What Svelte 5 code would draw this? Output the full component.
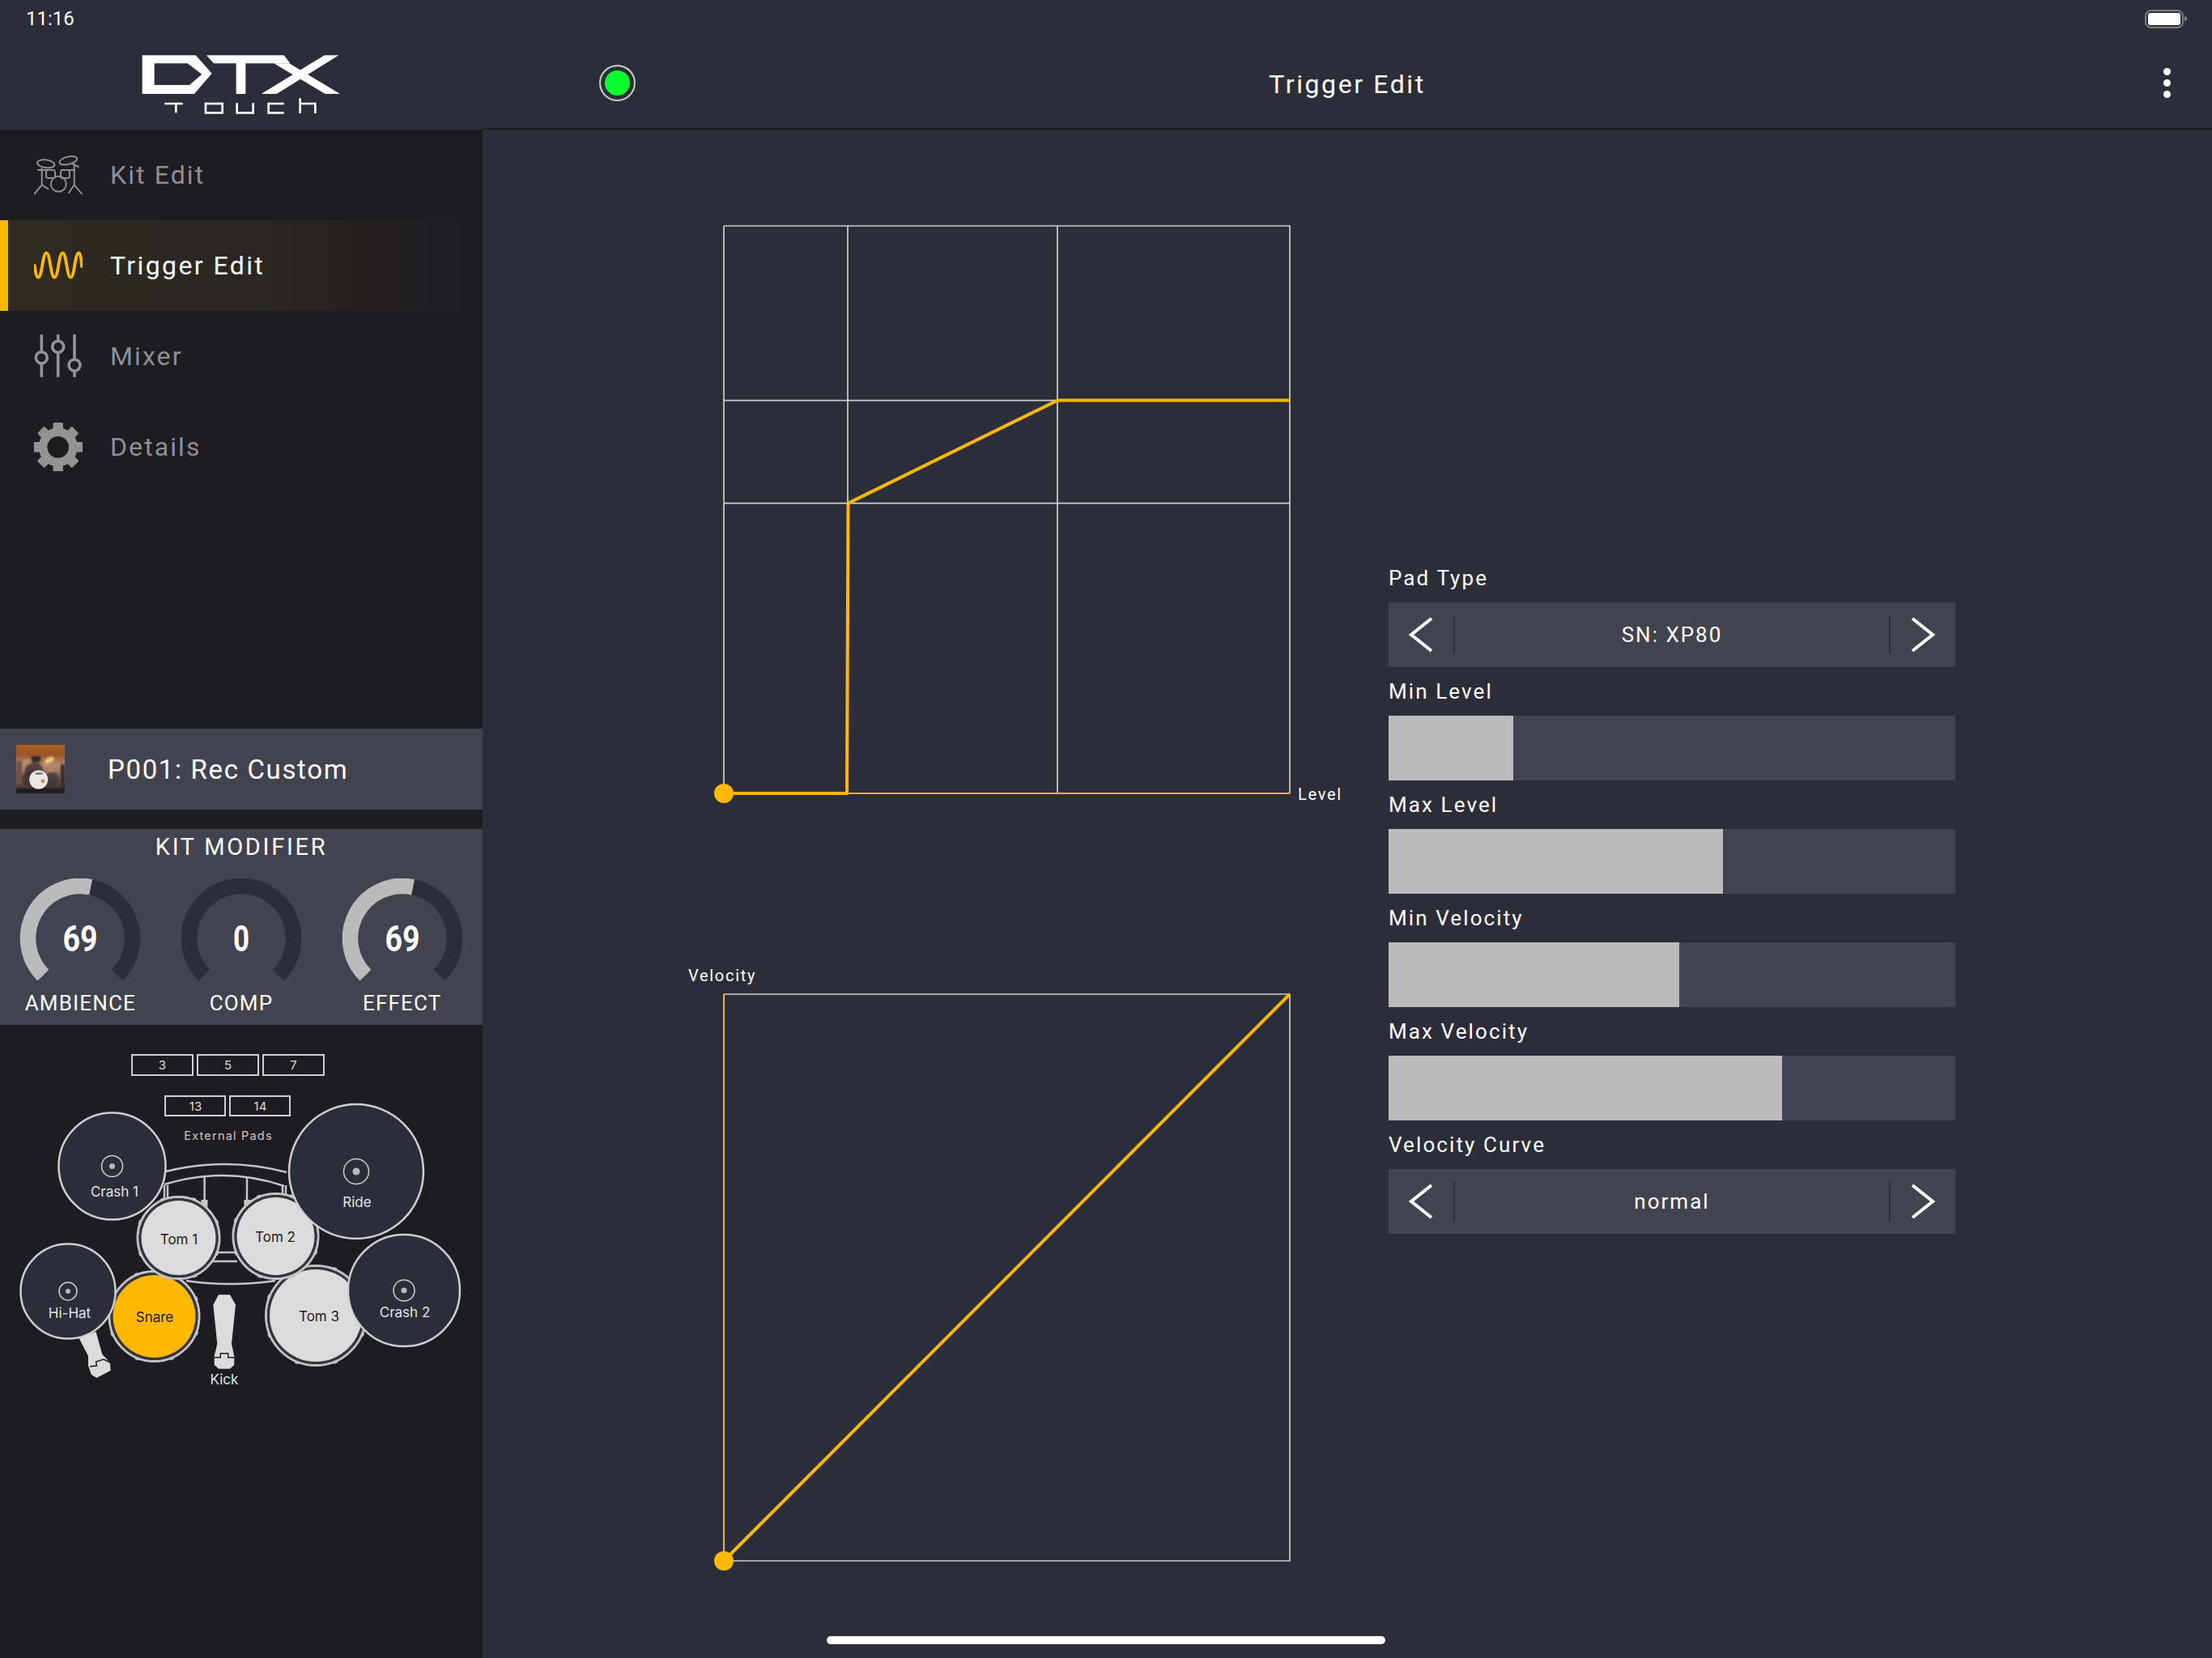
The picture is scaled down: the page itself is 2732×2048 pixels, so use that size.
<script>
    // --- Data ---
    const navItems = [
        { id: 'kit', label: 'Kit Edit' },
        { id: 'trigger', label: 'Trigger Edit', active: true },
        { id: 'mixer', label: 'Mixer' },
        { id: 'details', label: 'Details' }
    ];

    const knobs = [
        { label: 'AMBIENCE', value: 69, width: 43 },
        { label: 'COMP', value: 0, width: 20 },
        { label: 'EFFECT', value: 69, width: 43 }
    ];

    const controls = [
        { label: 'Pad Type', type: 'stepper', text: 'SN: XP80' },
        { label: 'Min Level', type: 'bar', fill: 154 },
        { label: 'Max Level', type: 'bar', fill: 413 },
        { label: 'Min Velocity', type: 'bar', fill: 359 },
        { label: 'Max Velocity', type: 'bar', fill: 486 },
        { label: 'Velocity Curve', type: 'stepper', text: 'normal' }
    ];

    // drawn back to front, they overlap
    const backDrums = [
        { cx: 390, cy: 1625, r: 57, label: 'Tom 3', tx: 394, ty: 1626 },
        { cx: 190.5, cy: 1626, r: 51, label: 'Snare', tx: 191, ty: 1627, active: true },
        { cx: 220.5, cy: 1529, r: 46, label: 'Tom 1', tx: 221, ty: 1531 },
        { cx: 340.5, cy: 1527, r: 48, label: 'Tom 2', tx: 340, ty: 1528 }
    ];

    const cymbals = [
        { cx: 138.5, cy: 1440.5, r: 66, ring: 13, dot: 3.5, label: 'Crash 1', tx: 141.5, ty: 1472 },
        { cx: 440, cy: 1447, r: 83, ring: 15.5, dot: 4.5, label: 'Ride', tx: 441, ty: 1485 },
        { cx: 84, cy: 1595, r: 58.5, ring: 11, dot: 3, label: 'Hi-Hat', tx: 86, ty: 1622 },
        { cx: 499, cy: 1594, r: 69, ring: 13, dot: 3.5, label: 'Crash 2', tx: 500, ty: 1621 }
    ];

    const extPads = [
        { x: 163, y: 1303, label: '3' }, { x: 244, y: 1303, label: '5' }, { x: 325, y: 1303, label: '7' },
        { x: 204, y: 1354, label: '13' }, { x: 284, y: 1354, label: '14' }
    ];

    const lugAngles = [0, 45, 90, 135, 180, 225, 270, 315];
    const gearTeeth = [0, 45, 90, 135];

    // --- Knob geometry ---
    const KNOB_R = 64.5;
    function polar(deg) {
        const a = (deg - 90) * Math.PI / 180;
        return [80 + KNOB_R * Math.cos(a), 74 + KNOB_R * Math.sin(a)];
    }
    function arc(from, to) {
        const [x1, y1] = polar(from);
        const [x2, y2] = polar(to);
        return `M${x1} ${y1} A${KNOB_R} ${KNOB_R} 0 ${to - from > 180 ? 1 : 0} 1 ${x2} ${y2}`;
    }
    const valueAngle = (v) => -135 + (v / 127) * 270;
</script>

<div class="app">
    <header class="top">
        <div class="logo-cell">
            <svg class="logo" viewBox="0 0 840 300" width="280" height="100" aria-label="DTX Touch">
                <path fill="#fff" fill-rule="evenodd" d="M47 55H245L305 122L240 198H47ZM92 85V165H222L268 125L215 85Z" />
                <path fill="#fff" d="M285 55H572L595 85H430V198H395V85H312Z" />
                <path fill="#fff" d="M722 55H775L545 198H488Z" />
                <path fill="#fff" d="M535 85H592L780 198H725Z" />
                <g fill="none" stroke="#fff" stroke-width="8">
                    <path d="M130 234H197M172 234V268" />
                    <rect x="282" y="234" width="62" height="34" />
                    <path d="M398 232V268H458V232" />
                    <path d="M572 234H515V268H572" />
                    <path d="M632 214V270M632 234H688V270" />
                </g>
            </svg>
        </div>
        <div class="top-main">
            <div class="lamp-cell"><span class="lamp"></span></div>
            <h1>Trigger Edit</h1>
            <div class="menu-cell">
                <span class="dots"><i></i><i></i><i></i></span>
            </div>
        </div>
    </header>

    <div class="body">
        <aside class="side">
            <nav>
                {#each navItems as item}
                    <div class="nav-row" class:active={item.active}>
                        <svg class="nav-icon" viewBox="0 0 60 60" width="60" height="60">
                            {#if item.id === 'kit'}
                                <g fill="none" stroke="#8e8e92" stroke-width="2" stroke-linecap="round">
                                    <ellipse cx="14.7" cy="16.3" rx="10.7" ry="4.8" transform="rotate(8 14.7 16.3)" />
                                    <ellipse cx="42.3" cy="12.3" rx="11" ry="4.6" transform="rotate(-14 42.3 12.3)" />
                                    <rect x="15" y="24" width="11" height="10" rx="2.5" />
                                    <rect x="33" y="24" width="11" height="10" rx="2.5" />
                                    <circle cx="30.3" cy="41.3" r="9.5" />
                                    <path d="M9.7 22V42.3L0.7 53.3M9.7 42.3L17.3 47.3M49.7 17.3V42.3L59 53.3M49.7 42.3L43 52.3" />
                                    <path d="M46.3 15.7L54.7 20M5 24H20M38 24H50" />
                                </g>
                            {:else if item.id === 'trigger'}
                                <path fill="none" stroke="#ffb800" stroke-width="3.8" stroke-linecap="round"
                                    d="M0.7 30C1.5 38 3 44.7 5.3 44.7C10 44.7 10.5 14.3 15.3 14.3C20 14.3 20.5 44.7 25.3 44.7S30.5 14.3 35.3 14.3S40.5 44.7 45.3 44.7S50.5 14.3 55.3 14.3C57.5 14.3 58.5 22 59 31" />
                            {:else if item.id === 'mixer'}
                                <g fill="none" stroke="#939393" stroke-width="3.6">
                                    <path d="M9.3 3.3V24.7M9.3 38.7V55.7M29.7 3.3V11.3M29.7 25.3V55.7M50 3.3V34M50 48V55.7" />
                                    <circle cx="9.3" cy="31.7" r="7" />
                                    <circle cx="29.7" cy="18.3" r="7" />
                                    <circle cx="50" cy="41" r="7" />
                                </g>
                            {:else}
                                <g fill="#939393">
                                    {#each gearTeeth as deg}
                                        <rect x="23.5" y="0" width="12.4" height="60.6" rx="1.5" transform="rotate({deg} 29.7 30.3)" />
                                    {/each}
                                    <circle cx="29.7" cy="30.3" r="24" />
                                </g>
                                <circle cx="29.7" cy="30.3" r="13.3" fill="#1c1c21" />
                            {/if}
                        </svg>
                        <span>{item.label}</span>
                    </div>
                {/each}
            </nav>

            <div class="kit-row">
                <svg class="thumb" viewBox="0 0 60 60" width="60" height="60">
                    <defs>
                        <linearGradient id="room" x1="0" y1="0" x2="0" y2="1">
                            <stop offset="0" stop-color="#b0601f" />
                            <stop offset="0.2" stop-color="#9a5428" />
                            <stop offset="0.42" stop-color="#b98a72" />
                            <stop offset="0.75" stop-color="#6a5048" />
                            <stop offset="1" stop-color="#2b2320" />
                        </linearGradient>
                        <filter id="soft"><feGaussianBlur stdDeviation="0.8" /></filter>
                    </defs>
                    <rect width="60" height="60" fill="url(#room)" />
                    <g filter="url(#soft)">
                        <rect x="0" y="20" width="7" height="28" fill="#6e5248" />
                        <rect x="55" y="24" width="5" height="30" fill="#3a2c28" />
                        <rect x="19" y="14" width="11" height="7" fill="#2c2a2c" />
                        <ellipse cx="22" cy="32" rx="11" ry="11" fill="#2a2527" opacity="0.7" />
                        <ellipse cx="14" cy="42" rx="7" ry="9" fill="#332c2c" opacity="0.7" />
                        <ellipse cx="44" cy="43" rx="9" ry="9" fill="#2f2a2a" opacity="0.65" />
                        <ellipse cx="41" cy="19" rx="6.5" ry="3.5" fill="#e8c27a" transform="rotate(-25 41 19)" />
                        <ellipse cx="13" cy="21" rx="6" ry="3" fill="#b3905a" />
                        <ellipse cx="42" cy="31" rx="4" ry="1.6" fill="#b3905a" />
                        <rect x="0" y="54" width="60" height="6" fill="#1f1b1a" />
                    </g>
                    <circle cx="27.7" cy="43" r="11.5" fill="#e9e7e4" />
                    <ellipse cx="28" cy="35.5" rx="5" ry="1.2" fill="#77706a" />
                    <circle cx="33" cy="45" r="2.4" fill="#b09a6a" />
                </svg>
                <span>P001: Rec Custom</span>
            </div>

            <section class="modifier">
                <h2>KIT MODIFIER</h2>
                <div class="knobs">
                    {#each knobs as knob}
                        <div class="knob">
                            <svg viewBox="0 0 160 130" width="160" height="130">
                                <path d={arc(valueAngle(knob.value), 135)} class="knob-track" />
                                {#if knob.value > 0}
                                    <path d={arc(-135, valueAngle(knob.value))} class="knob-fill" />
                                {/if}
                                <text x="80" y="90" class="knob-value" textLength={knob.width} lengthAdjust="spacingAndGlyphs">{knob.value}</text>
                            </svg>
                            <span>{knob.label}</span>
                        </div>
                    {/each}
                </div>
            </section>

            <svg class="drums" viewBox="0 1266 596 450" width="596" height="450">
                {#each extPads as pad}
                    <rect class="ext" x={pad.x} y={pad.y} width={pad.y < 1350 ? 75 : 74} height={pad.y < 1350 ? 25 : 24} />
                    <text class="ext-text" x={pad.x + 37.5} y={pad.y + 18}>{pad.label}</text>
                {/each}
                <text class="ext-title" x="282" y="1408">External Pads</text>

                <g class="rack">
                    <path d="M205 1447Q280 1428.5 354 1448" />
                    <path d="M203 1463Q278 1440 351 1465" />
                    <path d="M252.6 1454V1484M305 1454V1484" />
                    <path d="M203 1464V1482M207 1464V1482M349 1464V1478M353 1464V1478" />
                    <path d="M268 1547H290M262 1558H293" />
                    <path d="M230 1582Q285 1590 340 1582" />
                    <path d="M212 1479H228M332 1476H350" />
                </g>
                <rect x="248.5" y="1482" width="8" height="9" fill="#c8c8c8" />
                <rect x="301.5" y="1482" width="8" height="9" fill="#c8c8c8" />

                <polygon class="pedal" points="263.3,1611.7 270,1599.3 284,1599.3 291,1611.7 286,1660 289.3,1675 289.3,1686 284,1690.7 270,1690.7 264.7,1686 264.7,1675 268.3,1660" />
                <path class="pedal-notch" d="M264.7 1676.7H272.3V1671.7H281.7V1676.7H289.3" />
                <polygon class="pedal" points="97.6,1653 118.6,1645 126.3,1673 135.9,1683 136.6,1693 119.4,1702 112.9,1698 109,1687 109,1675" />
                <path class="pedal-notch" d="M111 1688L119.4 1687L118.6 1682L128 1679L135.9 1683" />
                <text class="drum-dark light" x="277" y="1704">Kick</text>

                {#each backDrums as d}
                    <circle cx={d.cx} cy={d.cy} r={d.r + 4.5} class="shell" />
                    {#each lugAngles as deg}
                        <rect x={d.cx - 2.5} y={d.cy - d.r - 7} width="5" height="4" class="lug" transform="rotate({deg + 22} {d.cx} {d.cy})" />
                    {/each}
                    <circle cx={d.cx} cy={d.cy} r={d.r + 1.5} class="rim" />
                    <circle cx={d.cx} cy={d.cy} r={d.r} class="head" class:hit={d.active} />
                    <text class="drum-dark" x={d.tx} y={d.ty}>{d.label}</text>
                {/each}

                {#each cymbals as c}
                    <circle cx={c.cx} cy={c.cy} r={c.r} class="cymbal" />
                    <circle cx={c.cx} cy={c.cy} r={c.ring} class="bell" />
                    <circle cx={c.cx} cy={c.cy} r={c.dot} fill="#b9b9b9" />
                    <text class="drum-dark light" x={c.tx} y={c.ty}>{c.label}</text>
                {/each}
            </svg>
        </aside>

        <main class="main">
            <div class="charts">
                <svg class="chart-level" viewBox="0 0 840 800" width="840" height="800">
                    <g class="grid">
                        <path d="M54 39H753V740M54 39V740M207 39V740M466 39V740M54 254.6H753M54 381.6H753" />
                    </g>
                    <path d="M207 740H753" class="curve-thin" />
                    <path d="M54 740H206L207.5 381.6L466 254.6H753" class="curve" />
                    <circle cx="54" cy="740" r="12" fill="#ffb800" />
                    <text x="763" y="748" class="axis">Level</text>
                </svg>
                <svg class="chart-velocity" viewBox="0 0 840 760" width="840" height="760">
                    <text x="10" y="21" class="axis">Velocity</text>
                    <g class="grid">
                        <path d="M54 37H753V737H54" />
                    </g>
                    <path d="M54 37V737" class="curve-thin" />
                    <path d="M54 737L753 37" class="curve" />
                    <circle cx="54" cy="737" r="12" fill="#ffb800" />
                </svg>
            </div>

            <div class="controls">
                {#each controls as c}
                    <div class="control">
                        <span class="control-label">{c.label}</span>
                        {#if c.type === 'stepper'}
                            <div class="stepper">
                                <span class="step">
                                    <svg viewBox="0 0 30 44" width="30" height="44"><polyline points="28,2 3,22 28,42" /></svg>
                                </span>
                                <span class="step-text">{c.text}</span>
                                <span class="step right">
                                    <svg viewBox="0 0 30 44" width="30" height="44"><polyline points="2,2 27,22 2,42" /></svg>
                                </span>
                            </div>
                        {:else}
                            <div class="bar"><div class="bar-fill" style="width: {c.fill}px"></div></div>
                        {/if}
                    </div>
                {/each}
            </div>
        </main>
    </div>

    <!-- iOS chrome, lies over the app -->
    <span class="clock">11:16</span>
    <span class="battery"><i></i></span>
    <span class="home"></span>
</div>

<style>
    :global(body) {
        margin: 0;
        background: #2b2e38;
        font-family: Roboto, 'Liberation Sans', sans-serif;
        color: #fff;
    }

    .app {
        position: relative;
        width: 2732px;
        height: 2048px;
        overflow: hidden;
        background: #2b2e38;
        display: flex;
        flex-direction: column;
    }

    /* --- Header --- */
    .top {
        display: flex;
        height: 160px;
        flex-shrink: 0;
    }
    .logo-cell {
        width: 596px;
        display: flex;
        justify-content: center;
        align-items: flex-end;
        padding: 0 0 10px 4px;
        box-sizing: border-box;
    }
    .top-main {
        flex: 1;
        display: grid;
        grid-template-columns: 1fr auto 1fr;
        align-items: center;
        border-bottom: 2px solid #1c1c21;
        padding-top: 46px;
        box-sizing: border-box;
    }
    .lamp-cell {
        padding-left: 144px;
        display: flex;
    }
    .lamp {
        width: 41px;
        height: 41px;
        border-radius: 50%;
        background: #0bff2f;
        border: 2px solid #c4c4c4;
        box-shadow: inset 0 0 0 5px #2b2e38;
    }
    h1 {
        margin: 3px 0 0;
        font-size: 32px;
        font-weight: 400;
        letter-spacing: 2.6px;
    }
    .menu-cell {
        display: flex;
        justify-content: flex-end;
        padding-right: 51px;
    }
    .dots {
        display: flex;
        flex-direction: column;
        gap: 5px;
    }
    .dots i {
        width: 9px;
        height: 9px;
        border-radius: 50%;
        background: #fff;
    }

    /* --- Sidebar --- */
    .body {
        flex: 1;
        display: flex;
        min-height: 0;
    }
    .side {
        width: 596px;
        flex-shrink: 0;
        background: #1c1c21;
        display: flex;
        flex-direction: column;
    }
    .nav-row {
        height: 112px;
        display: flex;
        align-items: center;
        gap: 34px;
        padding-left: 42px;
        color: #8f8f92;
        font-size: 32px;
        letter-spacing: 2.1px;
    }
    .nav-row.active {
        color: #fff;
        letter-spacing: 2.4px;
        background: linear-gradient(90deg, #302a20 0%, #2a2620 55%, #1c1c21 100%);
        box-shadow: inset 10px 0 0 #ffb800;
    }
    .kit-row {
        margin-top: 292px;
        height: 100px;
        background: #41444e;
        display: flex;
        align-items: center;
        gap: 53px;
        padding-left: 20px;
        font-size: 33px;
        letter-spacing: 1.65px;
    }
    .modifier {
        margin-top: 24px;
        height: 242px;
        background: #41444e;
    }
    h2 {
        margin: 0;
        height: 44px;
        line-height: 44px;
        text-align: center;
        font-size: 29px;
        font-weight: 400;
        letter-spacing: 2.7px;
    }
    .knobs {
        display: grid;
        grid-template-columns: repeat(3, 1fr);
        margin-top: 17px;
    }
    .knob {
        display: flex;
        flex-direction: column;
        align-items: center;
    }
    .knob svg {
        display: block;
    }
    .knob span {
        line-height: 48px;
        font-size: 26px;
        letter-spacing: 1.15px;
    }
    .knob-track,
    .knob-fill {
        fill: none;
        stroke-width: 19.5;
    }
    .knob-track {
        stroke: #2b2e38;
    }
    .knob-fill {
        stroke: #bbb;
    }
    .knob-value {
        fill: #fff;
        font-size: 44px;
        font-weight: 700;
        text-anchor: middle;
    }

    /* --- Drum map --- */
    .drums {
        display: block;
        font-family: Inter, 'Noto Sans', sans-serif;
    }
    .ext {
        fill: none;
        stroke: #cfcfcf;
        stroke-width: 2;
    }
    .ext-text {
        fill: #ddd;
        font-size: 15px;
        text-anchor: middle;
    }
    .ext-title {
        fill: #c9c9c9;
        font-size: 14.5px;
        letter-spacing: 1.2px;
        text-anchor: middle;
    }
    .rack {
        fill: none;
        stroke: #c4c4c4;
        stroke-width: 2.5;
    }
    .pedal {
        fill: #dcdcdc;
    }
    .pedal-notch {
        fill: none;
        stroke: #1c1c21;
        stroke-width: 1.5;
    }
    .shell {
        fill: #1c1c21;
        stroke: #c4c4c4;
        stroke-width: 3;
    }
    .lug {
        fill: #c4c4c4;
    }
    .rim {
        fill: none;
        stroke: #33363f;
        stroke-width: 3;
    }
    .head {
        fill: #dcdcdc;
    }
    .head.hit {
        fill: #ffb800;
    }
    .cymbal {
        fill: #2b2e38;
        stroke: #cfcfcf;
        stroke-width: 2.5;
    }
    .bell {
        fill: none;
        stroke: #cfcfcf;
        stroke-width: 1.5;
    }
    .drum-dark {
        fill: #1c1c21;
        font-size: 17px;
        text-anchor: middle;
        dominant-baseline: central;
    }
    .drum-dark.light {
        fill: #e4e4e4;
    }

    /* --- Main --- */
    .main {
        flex: 1;
        display: flex;
    }
    .charts {
        width: 875px;
        margin-left: 244px;
        padding-top: 80px;
    }
    .charts svg {
        display: block;
    }
    .chart-velocity {
        margin-top: 151px;
    }
    .grid path {
        fill: none;
        stroke: #cdcdcd;
        stroke-width: 1.7;
    }
    .curve {
        fill: none;
        stroke: #ffb800;
        stroke-width: 4;
        stroke-linejoin: round;
    }
    .curve-thin {
        fill: none;
        stroke: #e3b344;
        stroke-width: 2;
    }
    .axis {
        fill: #fff;
        font-size: 20px;
        letter-spacing: 1.7px;
    }

    .controls {
        width: 700px;
        padding-top: 524px;
    }
    .control-label {
        display: block;
        height: 60px;
        line-height: 60px;
        font-size: 26px;
        letter-spacing: 2.1px;
    }
    .stepper,
    .bar {
        height: 80px;
        background: #41444e;
    }
    .stepper {
        display: flex;
        align-items: center;
    }
    .step {
        width: 80px;
        height: 48px;
        display: flex;
        align-items: center;
        justify-content: center;
        border-right: 2px solid #2b2e38;
    }
    .step.right {
        border-right: none;
        border-left: 2px solid #2b2e38;
    }
    .step polyline {
        fill: none;
        stroke: #fff;
        stroke-width: 4;
    }
    .step-text {
        flex: 1;
        text-align: center;
        font-size: 26px;
        letter-spacing: 2px;
    }
    .bar-fill {
        height: 100%;
        background: #bbb;
    }

    /* --- iOS chrome --- */
    .clock {
        position: absolute;
        left: 32px;
        top: 9px;
        font-size: 24px;
        line-height: 28px;
    }
    .battery {
        position: absolute;
        left: 2649px;
        top: 12px;
        width: 48px;
        height: 23px;
        box-sizing: border-box;
        border: 2.5px solid #7b7e85;
        border-radius: 8px;
        padding: 2px;
        display: flex;
    }
    .battery::after {
        content: '';
        position: absolute;
        left: 47px;
        top: 5px;
        border-left: 4px solid #7b7e85;
        border-top: 4px solid transparent;
        border-bottom: 4px solid transparent;
    }
    .battery i {
        flex: 1;
        background: #fff;
        border-radius: 3px;
    }
    .home {
        position: absolute;
        left: 1021px;
        top: 2021px;
        width: 690px;
        height: 10px;
        border-radius: 5px;
        background: #fff;
    }
</style>
